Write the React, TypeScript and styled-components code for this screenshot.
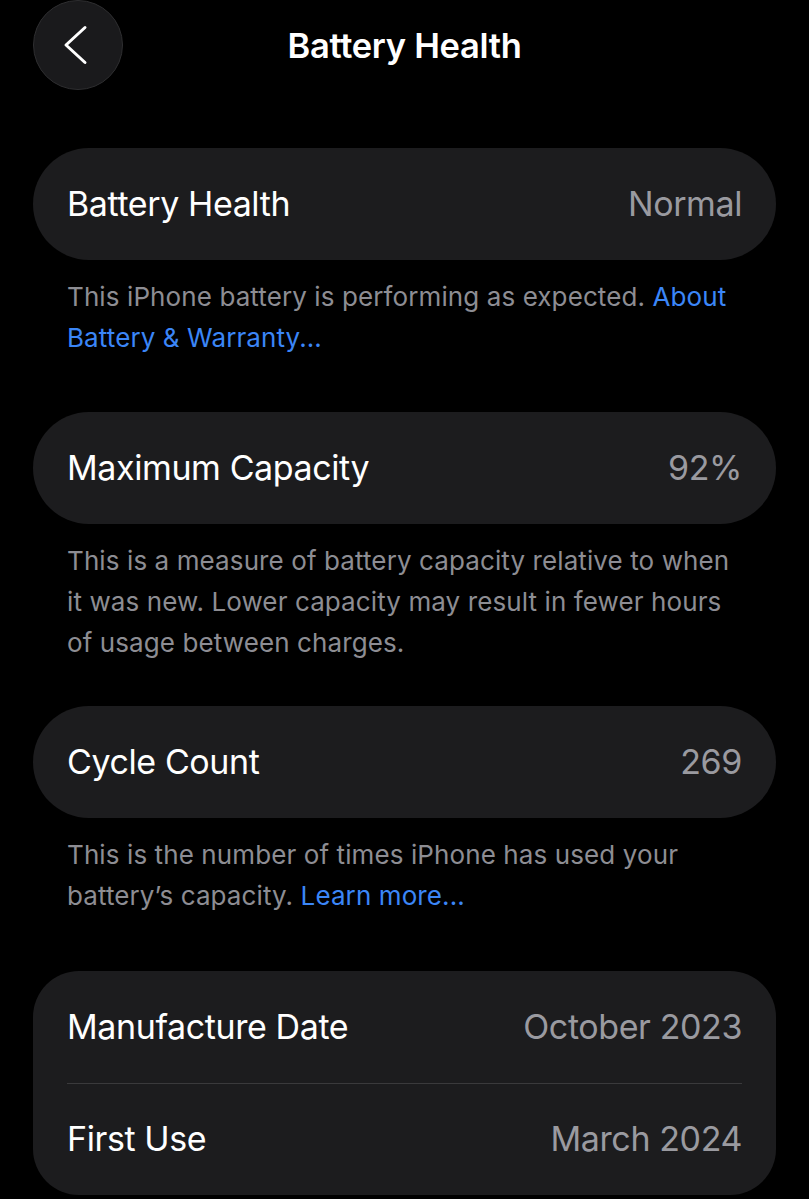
import React from 'react';
import styled, { createGlobalStyle } from 'styled-components';

const GlobalStyle = createGlobalStyle`
  html, body {
    margin: 0;
    padding: 0;
    background: #000;
  }
  body {
    font-family: Inter, "Noto Sans", "Liberation Sans", sans-serif;
    -webkit-font-smoothing: antialiased;
  }
`;

const Page = styled.div`
  width: 809px;
  min-height: 1199px;
  box-sizing: border-box;
  padding: 0 33px;
  background: #000;
  color: #fff;
`;

const Header = styled.header`
  position: relative;
  height: 90px;
  display: flex;
  align-items: center;
  justify-content: center;
  margin-bottom: 58px;
`;

const BackButton = styled.button`
  position: absolute;
  left: 0;
  top: 0;
  width: 90px;
  height: 90px;
  border-radius: 50%;
  background: #1a1a1c;
  border: 1.5px solid #2e2e30;
  display: flex;
  align-items: center;
  justify-content: center;
  padding: 0;
  cursor: pointer;
`;

const Title = styled.h1`
  margin: 0;
  font-size: 34.5px;
  font-weight: 600;
  letter-spacing: -0.3px;
  color: #fff;
`;

const Card = styled.div<{ $multi?: boolean }>`
  background: #1c1c1e;
  border-radius: ${(p) => (p.$multi ? '46px' : '56px')};
  padding: 0 34px;
`;

const Row = styled.div`
  height: 112px;
  display: flex;
  align-items: center;
  justify-content: space-between;
  padding-bottom: 2px;
  box-sizing: border-box;
  & + & {
    border-top: 1.5px solid #3a3a3c;
  }
`;

const Label = styled.span`
  font-size: 34px;
  letter-spacing: -0.4px;
  color: #fff;
`;

const Value = styled.span`
  font-size: 34px;
  letter-spacing: -0.4px;
  color: #9a9aa0;
`;

const Footer = styled.p<{ $after?: number }>`
  margin: 0;
  padding: 16px 34px ${(p) => p.$after ?? 50}px;
  font-size: 26px;
  line-height: 41px;
  letter-spacing: 0.1px;
  color: #8d8d93;
`;

const Link = styled.a`
  color: #3b86f7;
  text-decoration: none;
`;

const Chevron = () => (
  <svg width='30' height='40' viewBox='0 0 30 40' fill='none'>
    <path d='M22 2.5 L3 20 L22 37.5' stroke='#fff' strokeWidth='3' strokeLinecap='round' strokeLinejoin='round' />
  </svg>
);

const App: React.FC = () => {
  return (
    <>
      <GlobalStyle />
      <Page>
        <Header>
          <BackButton aria-label='Back'>
            <Chevron />
          </BackButton>
          <Title>Battery Health</Title>
        </Header>

        <Card>
          <Row>
            <Label>Battery Health</Label>
            <Value>Normal</Value>
          </Row>
        </Card>
        <Footer $after={54}>
          This iPhone battery is performing as expected. <Link href='#'>About Battery &amp; Warranty...</Link>
        </Footer>

        <Card>
          <Row>
            <Label>Maximum Capacity</Label>
            <Value>92%</Value>
          </Row>
        </Card>
        <Footer $after={43}>
          This is a measure of battery capacity relative to when it was new. Lower capacity may result in fewer
          hours of usage between charges.
        </Footer>

        <Card>
          <Row>
            <Label>Cycle Count</Label>
            <Value>269</Value>
          </Row>
        </Card>
        <Footer $after={55}>
          This is the number of times iPhone has used your battery’s capacity. <Link href='#'>Learn more...</Link>
        </Footer>

        <Card $multi>
          <Row>
            <Label>Manufacture Date</Label>
            <Value>October 2023</Value>
          </Row>
          <Row>
            <Label>First Use</Label>
            <Value>March 2024</Value>
          </Row>
        </Card>
      </Page>
    </>
  );
};

export default App;
